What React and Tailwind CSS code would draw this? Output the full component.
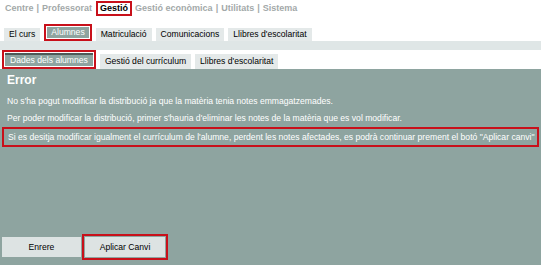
import React from "react";

const mainTabs = ["El curs", "Alumnes", "Matriculació", "Comunicacions", "Llibres d'escolaritat"];
const subTabs = ["Dades dels alumnes", "Gestió del currículum", "Llibres d'escolaritat"];

const App = () => {
	return (
		<div className="w-[541px] h-[265px] bg-white flex flex-col overflow-hidden font-['Liberation_Sans',Arial,sans-serif]">
			{/* menu de dalt */}
			<div className="h-[17px] flex items-center pl-[5px] text-[9px] font-bold text-[#a3a9a9]">
				<span>Centre</span>
				<span className="mx-[3px]">|</span>
				<span>Professorat</span>
				<span className="ml-[4px] mr-[3px] border-2 border-[#c8101a] px-[2px] leading-[11px] text-black">Gestió</span>
				<span>Gestió econòmica</span>
				<span className="mx-[3px]">|</span>
				<span>Utilitats</span>
				<span className="mx-[3px]">|</span>
				<span>Sistema</span>
			</div>

			<div className="h-[7px]" />

			{/* pestanyes principals */}
			<div className="flex items-end gap-[4px] pl-[4px] h-[17px]">
				{mainTabs.map((t) =>
					t === "Alumnes" ? (
						<div key={t} className="border-2 border-[#c8101a] p-[1px] h-[17px] flex">
							<div className="bg-[#8ea4a0] text-white text-[8.6px] px-[4px] flex items-center">{t}</div>
						</div>
					) : (
						<div key={t} className="bg-[#e4e9e9] text-black text-[8.6px] px-[5px] h-[13px] flex items-center">
							{t}
						</div>
					),
				)}
			</div>

			<div className="h-[9px] bg-[#dfe6e6]" />

			{/* subpestanyes */}
			<div className="flex items-end gap-[4px] pl-[2px] h-[19px]">
				{subTabs.map((t, i) =>
					i === 0 ? (
						<div key={t} className="border-2 border-[#c8101a] p-[1px] h-[19px] flex">
							<div className="bg-[#8ea4a0] border-t-2 border-[#4d5a58] text-white text-[8.6px] px-[5px] flex items-center">{t}</div>
						</div>
					) : (
						<div key={t} className="bg-[#e4e9e9] text-black text-[8.6px] px-[5px] h-[15px] flex items-center">
							{t}
						</div>
					),
				)}
			</div>

			{/* panell */}
			<div className="flex-1 bg-[#8ea4a0] flex flex-col pt-[3px]">
				<div className="pl-[7px] text-[12px] font-bold text-white leading-[16px]">Error</div>
				<p className="pl-[7px] mt-[7px] text-[8.6px] text-white leading-[12px]">
					No s'ha pogut modificar la distribució ja que la matèria tenia notes emmagatzemades.
				</p>
				<p className="pl-[7px] mt-[5px] text-[8.6px] text-white leading-[12px]">
					Per poder modificar la distribució, primer s'hauria d'eliminar les notes de la matèria que es vol modificar.
				</p>
				<div className="mx-[2px] mt-[3px] h-[20px] border-2 border-[#c8101a] flex items-center pl-[4px] text-[8.6px] text-white whitespace-nowrap">
					Si es desitja modificar igualment el currículum de l'alumne, perdent les notes afectades, es podrà continuar prement el botó "Aplicar canvi"
				</div>

				<div className="flex-1" />

				<div className="flex items-center pl-[2px] pb-[5px] gap-[1px]">
					<button className="w-[79px] h-[20px] bg-[#dde3e3] text-[8.6px] text-black">Enrere</button>
					<div className="border-2 border-[#c8101a] p-[1px]">
						<button className="w-[80px] h-[20px] bg-[#dde3e3] text-[8.6px] text-black block">Aplicar Canvi</button>
					</div>
				</div>
			</div>
		</div>
	);
};

export default App;
